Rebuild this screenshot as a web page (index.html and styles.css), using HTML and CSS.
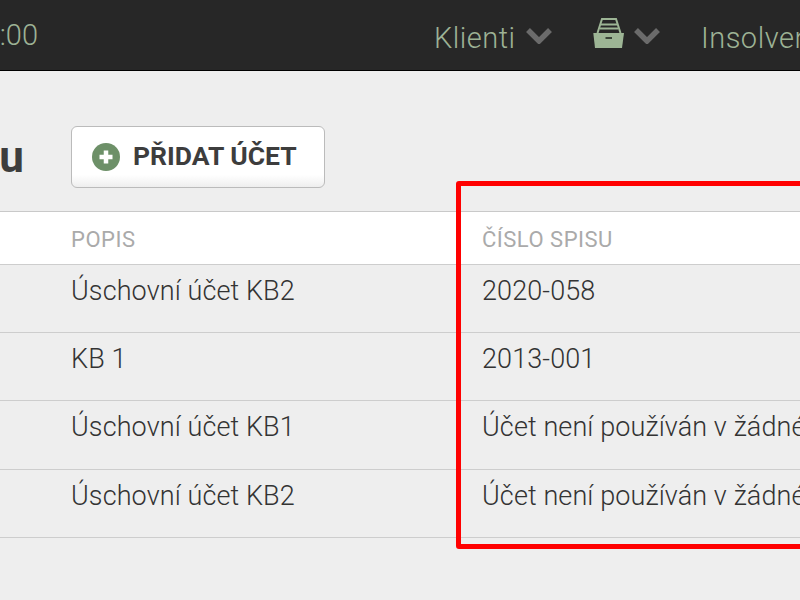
FILE: index.html
```html
<!DOCTYPE html>
<html lang="cs">
<head>
    <meta charset="UTF-8">
    <title>Účty</title>
    <link rel="stylesheet" href="styles.css">
</head>
<body>
    <header class="topbar">
        <div class="time">10:00</div>
        <nav class="menu">
            <a class="menu-item menu-klienti">Klienti
                <svg class="chevron" viewBox="0 0 26 17"><path d="M2 3l11 11L24 3"/></svg>
            </a>
            <a class="menu-item menu-box">
                <svg class="drawer" viewBox="0 0 32 30">
                    <path class="drawer-top" d="M4.500 15L9 1H23L27.500 15"/>
                    <path class="drawer-bar" d="M8 6.500H24M7 10.500H25"/>
                    <path class="drawer-fill" d="M0.300 15H31L29 30H2z"/>
                    <rect class="drawer-handle" x="12.500" y="19" width="6.500" height="2"/>
                </svg>
                <svg class="chevron" viewBox="0 0 26 17"><path d="M2 3l11 11L24 3"/></svg>
            </a>
            <a class="menu-item menu-insolvence">Insolvence</a>
        </nav>
    </header>

    <main>
        <div class="title-row">
            <h1 class="title"><span>Bankovní účty a účtu</span></h1>
            <button class="add-btn">
                <svg class="add-icon" viewBox="0 0 28 28">
                    <circle cx="14" cy="14" r="14"/>
                    <path d="M14 7.500v13M7.500 14h13"/>
                </svg>
                <span class="add-label">PŘIDAT ÚČET</span>
            </button>
        </div>

        <div class="accounts">
            <div class="row row-head">
                <div></div>
                <div>POPIS</div>
                <div>ČÍSLO SPISU</div>
            </div>
            <div class="row">
                <div></div>
                <div>Úschovní účet KB2</div>
                <div>2020-058</div>
            </div>
            <div class="row">
                <div></div>
                <div>KB 1</div>
                <div>2013-001</div>
            </div>
            <div class="row">
                <div></div>
                <div>Úschovní účet KB1</div>
                <div>Účet není používán v žádném spisu</div>
            </div>
            <div class="row">
                <div></div>
                <div>Úschovní účet KB2</div>
                <div>Účet není používán v žádném spisu</div>
            </div>
        </div>
    </main>

    <div class="highlight"></div>
</body>
</html>
```

FILE: styles.css
```css
html,body{
    margin: 0;
    padding: 0;
    height: 100%;
    overflow: hidden;
}
body{
    position: relative;
    background: #eee;
    font-family: Roboto, "Liberation Sans", sans-serif;
    color: #444;
}
.topbar{
    display: flex;
    align-items: center;
    justify-content: space-between;
    height: 70px;
    background: #272727;
    border-bottom: 1px solid #000;
    color: #9db295;
    font-weight: 300;
    white-space: nowrap;
}
.time{
    display: flex;
    justify-content: flex-end;
    width: 38px;
    font-size: 29px;
}
.menu{
    display: flex;
    align-items: center;
    width: 366px;
    flex-shrink: 0;
    padding-top: 5px;
    font-size: 29px;
    letter-spacing: 0.500px;
}
.menu-item{
    display: flex;
    align-items: center;
    flex-shrink: 0;
}
.menu-klienti{
    width: 159px;
    gap: 10px;
}
.menu-box{
    width: 108px;
    gap: 9px;
}
.chevron{
    width: 26px;
    height: 17px;
    margin-top: -5px;
    fill: none;
    stroke: #6b6b6b;
    stroke-width: 5.500;
}
.drawer{
    width: 32px;
    height: 30px;
    margin-top: -9px;
}
.drawer-fill{
    fill: #9db595;
}
.drawer-top{
    fill: #272727;
    stroke: #9db595;
    stroke-width: 2;
}
.drawer-bar{
    fill: none;
    stroke: #9db595;
    stroke-width: 2;
}
.drawer-handle{
    fill: #3a4438;
}
.title-row{
    display: flex;
    align-items: flex-start;
    padding-top: 55px;
    height: 85px;
}
.title{
    display: flex;
    justify-content: flex-end;
    width: 24px;
    margin: 0 47px 0 0;
    font-size: 44px;
    line-height: 62px;
    font-weight: 700;
    color: #3d3d3d;
    white-space: nowrap;
}
.add-btn{
    display: flex;
    align-items: center;
    gap: 13px;
    width: 254px;
    height: 61.500px;
    padding: 0 0 0 20px;
    background: linear-gradient(to bottom, #fff 80%, #eee);
    border: 1px solid #bbb;
    border-radius: 6px;
    font-family: inherit;
    font-size: 26.500px;
    font-weight: 700;
    color: #3d3d3d;
    white-space: nowrap;
}
.add-label{
    margin-top: -3px;
}
.add-icon{
    width: 28px;
    height: 28px;
}
.add-icon circle{
    fill: #6d9068;
}
.add-icon path{
    fill: none;
    stroke: #fff;
    stroke-width: 4.500;
}
.accounts{
    border-top: 1px solid #c9c9c9;
}
.row{
    display: grid;
    grid-template-columns: 71px 411px 1fr;
    height: 68.250px;
    box-sizing: border-box;
    padding-top: 10px;
    border-bottom: 1.500px solid #cdcdcd;
    font-size: 27px;
    font-weight: 300;
    letter-spacing: 0.100px;
    color: #333;
    white-space: nowrap;
}
.row-head{
    height: 52.800px;
    padding-top: 15px;
    background: #fff;
    font-size: 22px;
    font-weight: 400;
    letter-spacing: 0.500px;
    color: #aaa;
}
.highlight{
    position: absolute;
    left: 456px;
    top: 181px;
    width: 500px;
    height: 358px;
    border: 5px solid #f00;
    border-radius: 3px;
}
```
